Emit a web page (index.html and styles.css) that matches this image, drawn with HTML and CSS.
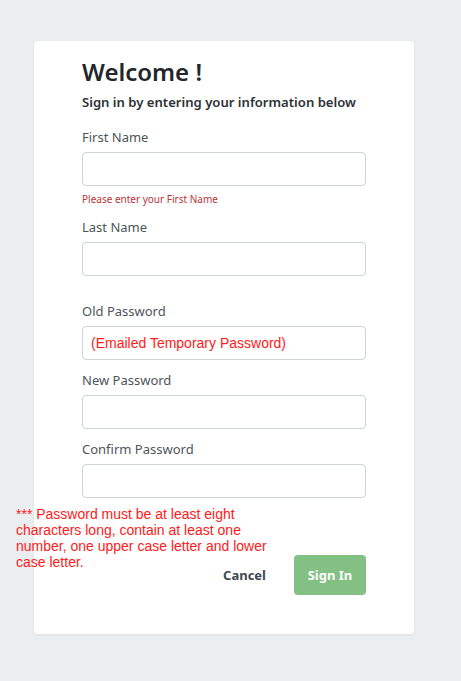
FILE: index.html
```html
<!DOCTYPE html>
<html lang="en">
<head>
<meta charset="utf-8">
<title>Sign in</title>
<link rel="stylesheet" href="styles.css">
</head>
<body>
<div class="page">
  <div class="card">
    <form class="form">
      <h1 class="title">Welcome !</h1>
      <p class="subtitle">Sign in by entering your information below</p>

      <div class="group">
        <label class="label">First Name</label>
        <input class="input" type="text">
        <div class="error">Please enter your First Name</div>
      </div>

      <div class="group group-wide">
        <label class="label">Last Name</label>
        <input class="input" type="text">
      </div>

      <div class="group">
        <label class="label">Old Password</label>
        <input class="input input-red" type="text" placeholder="(Emailed Temporary Password)">
      </div>

      <div class="group">
        <label class="label">New Password</label>
        <input class="input" type="password">
      </div>

      <div class="group">
        <label class="label">Confirm Password</label>
        <input class="input" type="password">
      </div>

      <div class="footer">
        <p class="note">*** Password must be at least eight characters long, contain at least one number, one upper case letter and lower case letter.</p>
        <div class="actions">
          <button type="button" class="btn btn-cancel">Cancel</button>
          <button type="button" class="btn btn-primary">Sign In</button>
        </div>
      </div>
    </form>
  </div>
</div>
</body>
</html>
```

FILE: styles.css
```css
* { box-sizing: border-box; }

html, body {
  margin: 0;
  padding: 0;
}

body {
  background: #ebeef1;
  font-family: "Noto Sans", "Open Sans", sans-serif;
  color: #495057;
  height: 681px;
}

.page {
  padding: 41px 0 0 34px;
}

.card {
  width: 380px;
  height: 593px;
  background: #ffffff;
  border-radius: 4px;
  box-shadow: 0 1px 3px rgba(0, 0, 0, 0.06);
  padding: 15px 48px 0 48px;
}

.form {
  display: flex;
  flex-direction: column;
}

.title {
  margin: 0;
  font-size: 24px;
  line-height: 32px;
  font-weight: 600;
  color: #23272b;
}

.subtitle {
  margin: 6px 0 0 0;
  font-size: 13.1px;
  line-height: 16px;
  font-weight: 600;
  color: #2d3236;
}

.group {
  display: flex;
  flex-direction: column;
  margin-top: 10px;
}

.form .group:first-of-type {
  margin-top: 17px;
}

.group-wide {
  margin-bottom: 15px;
}

.label {
  font-size: 13px;
  line-height: 20px;
  color: #4e5559;
  margin-bottom: 5px;
}

.input {
  height: 34px;
  width: 100%;
  border: 1px solid #ced4da;
  border-radius: 4px;
  background: #fff;
  padding: 0 8px;
  font-family: "Liberation Sans", Arial, sans-serif;
  font-size: 14px;
  outline: none;
}

.input-red::placeholder {
  color: #ff1a1a;
  opacity: 1;
}

.error {
  margin-top: 6px;
  font-size: 10px;
  line-height: 14px;
  color: #b8333a;
  margin-bottom: 1px;
}

.footer {
  display: grid;
  grid-template-areas: "stack";
}

.note {
  grid-area: stack;
  justify-self: start;
  align-self: start;
  margin: 8px 0 0 -66px;
  width: 262px;
  font-family: "Liberation Sans", Arial, sans-serif;
  font-size: 14px;
  line-height: 16px;
  color: #ff1a1a;
}

.actions {
  grid-area: stack;
  justify-self: end;
  align-self: start;
  margin-top: 57px;
  display: flex;
  align-items: center;
  gap: 16px;
}

.btn {
  font-family: "Noto Sans", "Open Sans", sans-serif;
  font-size: 13px;
  line-height: 9px;
  font-weight: 700;
  border: none;
  border-radius: 4px;
  height: 40px;
  cursor: pointer;
}

.btn-cancel {
  background: transparent;
  color: #3d4850;
  padding: 0 12px;
}

.btn-primary {
  background: #82c084;
  color: #ffffff;
  width: 72px;
  padding: 0;
}
```
